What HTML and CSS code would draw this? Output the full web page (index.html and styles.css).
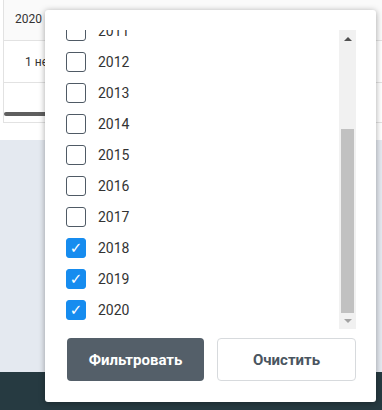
FILE: index.html
```html
<!DOCTYPE html>
<html lang="ru">
<head>
    <meta charset="UTF-8">
    <title>Фильтр по году</title>
    <link rel="stylesheet" href="styles.css">
</head>
<body>
    <div class="page">
        <div class="grid">
            <div class="grid-row first">
                <div class="cell year-cell">2020</div>
            </div>
            <div class="grid-row second">
                <div class="cell date-cell">1 неделя</div>
            </div>
            <div class="grid-scroll">
                <div class="h-thumb"></div>
            </div>
        </div>
        <div class="gap"></div>
        <div class="content"></div>
        <div class="footer"></div>
    </div>

    <div class="filter-popup">
        <div class="list-wrap">
            <div class="year-list">
                <label class="year-item"><span class="box"></span>2011</label>
                <label class="year-item"><span class="box"></span>2012</label>
                <label class="year-item"><span class="box"></span>2013</label>
                <label class="year-item"><span class="box"></span>2014</label>
                <label class="year-item"><span class="box"></span>2015</label>
                <label class="year-item"><span class="box"></span>2016</label>
                <label class="year-item"><span class="box"></span>2017</label>
                <label class="year-item"><span class="box checked">✓</span>2018</label>
                <label class="year-item"><span class="box checked">✓</span>2019</label>
                <label class="year-item"><span class="box checked">✓</span>2020</label>
            </div>
            <div class="scrollbar">
                <div class="arrow up"></div>
                <div class="track">
                    <div class="thumb"></div>
                </div>
                <div class="arrow down"></div>
            </div>
        </div>
        <div class="actions">
            <button class="btn btn-filter">Фильтровать</button>
            <button class="btn btn-clear">Очистить</button>
        </div>
    </div>
</body>
</html>
```

FILE: styles.css
```css
body {
    margin: 0;
    padding: 0;
    font-family: Roboto, "Liberation Sans", Arial, sans-serif;
    color: #333;
    background-color: #fff;
    overflow: hidden;
}
.page {
    width: 382px;
    height: 410px;
    display: flex;
    flex-direction: column;
}
.grid {
    margin-left: 3px;
    border-left: 1px solid #e2e2e2;
}
.grid-row {
    border-bottom: 1px solid #e2e2e2;
    display: flex;
    align-items: center;
}
.grid-row.first {
    height: 40px;
    background-color: #fafafa;
}
.grid-row.second {
    height: 41px;
}
.cell {
    font-size: 12px;
    white-space: nowrap;
}
.year-cell {
    padding-left: 11px;
    padding-bottom: 2px;
}
.date-cell {
    padding-left: 21px;
    padding-top: 1px;
}
.grid-scroll {
    height: 40px;
    border-bottom: 1px solid #e2e2e2;
    display: flex;
    flex-direction: column;
    justify-content: flex-end;
    padding-bottom: 6px;
    box-sizing: border-box;
}
.h-thumb {
    height: 4px;
    width: 200px;
    background-color: #5f5f5f;
    border-radius: 2px;
}
.gap {
    height: 17px;
}
.content {
    height: 232px;
    background-color: #e4e9f0;
}
.footer {
    flex: 1;
    background-color: #263a41;
}

.filter-popup {
    position: absolute;
    left: 45px;
    top: 10px;
    width: 331px;
    height: 392px;
    box-sizing: border-box;
    padding: 20px 20px 21px 21px;
    background-color: #fff;
    border-radius: 3px;
    box-shadow: 0 1px 6px rgba(0, 0, 0, 0.35);
    display: flex;
    flex-direction: column;
}
.list-wrap {
    height: 299px;
    display: flex;
}
.year-list {
    flex: 1;
    overflow: hidden;
    display: flex;
    flex-direction: column;
    justify-content: flex-end;
    padding-bottom: 4px;
}
.year-item {
    flex-shrink: 0;
    height: 31px;
    display: flex;
    align-items: center;
    gap: 12px;
    font-size: 14px;
    color: #333;
}
.box {
    width: 20px;
    height: 20px;
    box-sizing: border-box;
    border: 1.5px solid #4f5a65;
    border-radius: 3px;
    display: flex;
    align-items: center;
    justify-content: center;
    font-family: "DejaVu Sans", sans-serif;
    font-size: 15px;
    color: #fff;
}
.box.checked {
    background-color: #168cef;
    border-color: #168cef;
}
.scrollbar {
    width: 17px;
    background-color: #f1f1f1;
    display: flex;
    flex-direction: column;
}
.arrow {
    height: 17px;
    display: flex;
    align-items: center;
    justify-content: center;
}
.arrow.up::before {
    content: "";
    border-left: 4px solid transparent;
    border-right: 4px solid transparent;
    border-bottom: 4px solid #505050;
}
.arrow.down {
    height: 16px;
}
.arrow.down::before {
    content: "";
    border-left: 4px solid transparent;
    border-right: 4px solid transparent;
    border-top: 4px solid #a3a3a3;
}
.track {
    flex: 1;
    display: flex;
    flex-direction: column;
    justify-content: flex-end;
    padding: 0 2px;
}
.thumb {
    height: 184px;
    background-color: #c1c1c1;
}
.actions {
    margin-top: 9px;
    display: flex;
    gap: 13px;
}
.btn {
    flex: 1;
    height: 43px;
    border-radius: 4px;
    font-family: Roboto, "Liberation Sans", Arial, sans-serif;
    font-size: 15px;
    font-weight: bold;
    cursor: pointer;
}
.btn-filter {
    background-color: #545f69;
    color: #fff;
    border: none;
    margin-left: 1px;
}
.btn-clear {
    background-color: #fff;
    color: #4a5560;
    border: 1px solid #d7dadd;
}
```
